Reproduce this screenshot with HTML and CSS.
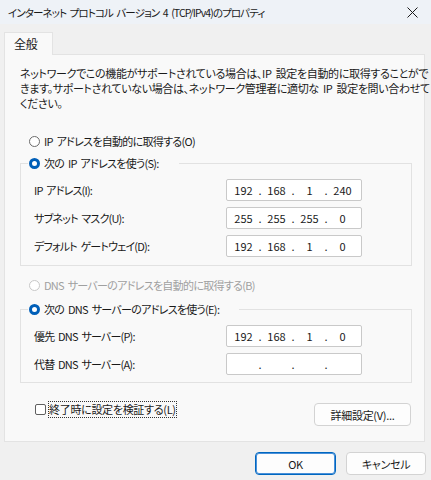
FILE: index.html
```html
<!DOCTYPE html>
<html lang="ja">
<head>
    <meta charset="UTF-8">
    <title>インターネット プロトコル バージョン 4 (TCP/IPv4)のプロパティ</title>
    <link rel="stylesheet" href="styles.css">
</head>
<body>
    <div class="titlebar">
        <span class="title">インターネット プロトコル バージョン 4 (TCP/IPv4)のプロパティ</span>
        <svg class="close" width="11" height="11" viewBox="0 0 11 11">
            <path d="M0.5 0.5 L10.5 10.5 M10.5 0.5 L0.5 10.5" stroke="#1a1a1a" stroke-width="1" fill="none"/>
        </svg>
    </div>

    <div class="window-body">
        <div class="tabs">
            <div class="tab">全般</div>
        </div>
        <div class="panel">
            <p class="desc">ネットワークでこの機能がサポートされている場合は、IP 設定を自動的に取得することがで<br>きます。サポートされていない場合は、ネットワーク管理者に適切な IP 設定を問い合わせて<br>ください。</p>

            <div class="option first">
                <span class="radio"></span>IP アドレスを自動的に取得する(O)
            </div>

            <fieldset class="group">
                <legend class="option"><span class="radio checked"></span>次の IP アドレスを使う(S):</legend>
                <div class="field">
                    <label>IP アドレス(I):</label>
                    <div class="ipbox"><span>192</span><i>.</i><span>168</span><i>.</i><span>1</span><i>.</i><span>240</span></div>
                </div>
                <div class="field">
                    <label>サブネット マスク(U):</label>
                    <div class="ipbox"><span>255</span><i>.</i><span>255</span><i>.</i><span>255</span><i>.</i><span>0</span></div>
                </div>
                <div class="field">
                    <label>デフォルト ゲートウェイ(D):</label>
                    <div class="ipbox"><span>192</span><i>.</i><span>168</span><i>.</i><span>1</span><i>.</i><span>0</span></div>
                </div>
            </fieldset>

            <div class="option disabled dns-auto">
                <span class="radio"></span>DNS サーバーのアドレスを自動的に取得する(B)
            </div>

            <fieldset class="group second">
                <legend class="option"><span class="radio checked"></span>次の DNS サーバーのアドレスを使う(E):</legend>
                <div class="field">
                    <label>優先 DNS サーバー(P):</label>
                    <div class="ipbox"><span>192</span><i>.</i><span>168</span><i>.</i><span>1</span><i>.</i><span>0</span></div>
                </div>
                <div class="field">
                    <label>代替 DNS サーバー(A):</label>
                    <div class="ipbox"><span></span><i>.</i><span></span><i>.</i><span></span><i>.</i><span></span></div>
                </div>
            </fieldset>

            <div class="bottom-row">
                <div class="check">
                    <span class="checkbox"></span><span class="focus">終了時に設定を検証する(L)</span>
                </div>
                <button class="btn advanced">詳細設定(V)...</button>
            </div>
        </div>

        <div class="footer">
            <button class="btn ok">OK</button>
            <button class="btn">キャンセル</button>
        </div>
    </div>
</body>
</html>
```

FILE: styles.css
```css
body {
    margin: 0;
    width: 431px;
    height: 480px;
    background-color: #f0f0f0;
    font-family: "Noto Sans CJK JP", "Noto Sans", sans-serif;
    font-size: 11px;
    letter-spacing: -0.3px;
    word-spacing: 2px;
    font-feature-settings: "palt";
    color: #1a1a1a;
    overflow: hidden;
}

.titlebar {
    height: 24px;
    display: flex;
    align-items: center;
    justify-content: space-between;
    padding: 0 13px 0 8px;
    background-color: #eef2f7;
}

.title {
    font-size: 10.5px;
    letter-spacing: -0.9px;
}

.window-body {
    padding: 8px 6px 0 4px;
}

.tabs {
    display: flex;
}

.tab {
    position: relative;
    z-index: 1;
    width: 49px;
    height: 23px;
    margin-bottom: -1px;
    box-sizing: border-box;
    padding-left: 9px;
    line-height: 21px;
    font-size: 12px;
    border: 1px solid #e3e3e3;
    border-bottom: none;
    background-color: #f9f9f9;
}

.panel {
    height: 388px;
    box-sizing: border-box;
    padding: 11px 12px 0 15px;
    border: 1px solid #e3e3e3;
    background-color: #f9f9f9;
}

.desc {
    margin: 0;
    line-height: 15px;
    white-space: nowrap;
    letter-spacing: -0.35px;
}

.option {
    display: flex;
    align-items: center;
    height: 16px;
    margin-left: 9px;
    letter-spacing: -0.7px;
}

.option.first {
    margin-top: 22px;
}

.radio {
    width: 11px;
    height: 11px;
    box-sizing: border-box;
    margin-right: 4px;
    border: 1px solid #6b6b6b;
    border-radius: 50%;
    background-color: #fff;
}

.radio.checked {
    border: 3px solid #005fb8;
}

.disabled {
    color: #a0a0a0;
}

.disabled .radio {
    border-color: #c8c8c8;
}

.dns-auto {
    margin-top: 11px;
}

.group {
    margin: 6px 0 0 0;
    padding: 8px 12px 8px 13px;
    width: 392px;
    box-sizing: border-box;
    border: 1px solid #e2e2e2;
    min-width: 0;
}

.group.second {
    margin-top: 8px;
    padding-bottom: 7px;
}

.group legend {
    margin-left: -6px;
    padding: 0 20px 0 1px;
}

.field {
    display: grid;
    grid-template-columns: 192px 136px;
    align-items: center;
    height: 22px;
}

.field label {
    letter-spacing: -0.8px;
}

.field + .field {
    margin-top: 6px;
}

.ipbox {
    display: flex;
    height: 22px;
    box-sizing: border-box;
    padding-left: 3px;
    border: 1px solid #c9c9c9;
    border-radius: 2px;
    background-color: #fff;
    line-height: 20px;
    letter-spacing: 0;
}

.ipbox span {
    width: 27px;
    text-align: center;
}

.ipbox i {
    width: 6px;
    font-style: normal;
    text-align: center;
}

.bottom-row {
    display: flex;
    justify-content: space-between;
    align-items: flex-start;
    width: 391px;
    margin-top: 18px;
}

.check {
    display: flex;
    align-items: center;
    margin-left: 15px;
}

.checkbox {
    width: 11px;
    height: 11px;
    box-sizing: border-box;
    margin-right: 2px;
    border: 1px solid #5f5f5f;
    border-radius: 2px;
    background-color: #fff;
}

.focus {
    line-height: 15px;
    border: 1px dotted #333;
}

.btn {
    height: 23px;
    box-sizing: border-box;
    padding: 0;
    border: 1px solid #d3d3d3;
    border-radius: 4px;
    background-color: #fdfdfd;
    font-family: inherit;
    font-size: 11px;
    letter-spacing: -0.3px;
    font-feature-settings: "palt";
    color: #1a1a1a;
}

.advanced {
    width: 97px;
    margin-top: 2px;
}

.footer {
    display: flex;
    justify-content: flex-end;
    gap: 10px;
    margin-top: 10px;
    margin-right: -1px;
}

.footer .btn {
    width: 80px;
}

.btn.ok {
    width: 81px;
    border: 1px solid #0067c0;
    box-shadow: inset 0 0 0 1px #4a90d9;
}
```
